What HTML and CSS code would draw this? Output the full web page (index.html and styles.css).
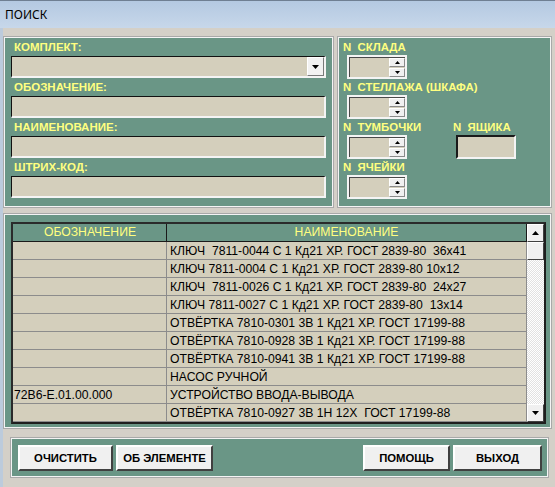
FILE: index.html
```html
<!DOCTYPE html>
<html>
<head>
<meta charset="utf-8">
<title>ПОИСК</title>
<link rel="stylesheet" href="styles.css">
</head>
<body>
<div class="titlebar">ПОИСК</div>
<div class="main">
  <div class="top">
    <div class="panel left">
      <div class="lbl">КОМПЛЕКТ:</div>
      <div class="field combo"><span class="dd"><svg width="7" height="4" viewBox="0 0 7 4"><path d="M0 0H7L3.5 4Z" fill="#000"/></svg></span></div>
      <div class="lbl">ОБОЗНАЧЕНИЕ:</div>
      <div class="field"></div>
      <div class="lbl">НАИМЕНОВАНИЕ:</div>
      <div class="field"></div>
      <div class="lbl">ШТРИХ-КОД:</div>
      <div class="field"></div>
    </div>
    <div class="panel right">
      <div class="rlbl">N  СКЛАДА</div>
      <div class="spin"><div class="sbtns"><span class="sb"><svg width="5" height="3" viewBox="0 0 5 3"><path d="M0 3H5L2.5 0Z" fill="#000"/></svg></span><span class="sb"><svg width="5" height="3" viewBox="0 0 5 3"><path d="M0 0H5L2.5 3Z" fill="#000"/></svg></span></div></div>
      <div class="rlbl">N  СТЕЛЛАЖА (ШКАФА)</div>
      <div class="spin"><div class="sbtns"><span class="sb"><svg width="5" height="3" viewBox="0 0 5 3"><path d="M0 3H5L2.5 0Z" fill="#000"/></svg></span><span class="sb"><svg width="5" height="3" viewBox="0 0 5 3"><path d="M0 0H5L2.5 3Z" fill="#000"/></svg></span></div></div>
      <div class="pair">
        <div class="pcol1">
          <div class="rlbl">N  ТУМБОЧКИ</div>
          <div class="spin"><div class="sbtns"><span class="sb"><svg width="5" height="3" viewBox="0 0 5 3"><path d="M0 3H5L2.5 0Z" fill="#000"/></svg></span><span class="sb"><svg width="5" height="3" viewBox="0 0 5 3"><path d="M0 0H5L2.5 3Z" fill="#000"/></svg></span></div></div>
        </div>
        <div class="pcol2">
          <div class="rlbl">N  ЯЩИКА</div>
          <div class="box"></div>
        </div>
      </div>
      <div class="rlbl">N  ЯЧЕЙКИ</div>
      <div class="spin"><div class="sbtns"><span class="sb"><svg width="5" height="3" viewBox="0 0 5 3"><path d="M0 3H5L2.5 0Z" fill="#000"/></svg></span><span class="sb"><svg width="5" height="3" viewBox="0 0 5 3"><path d="M0 0H5L2.5 3Z" fill="#000"/></svg></span></div></div>
    </div>
  </div>

  <div class="panel tablepanel">
    <div class="grid">
      <div class="tbl">
        <div class="row head"><div class="c1">ОБОЗНАЧЕНИЕ</div><div class="c2 hc">НАИМЕНОВАНИЕ</div></div>
        <div class="row"><div class="c1"></div><div class="c2">КЛЮЧ  7811-0044 С 1 Кд21 ХР. ГОСТ 2839-80  36х41</div></div>
        <div class="row"><div class="c1"></div><div class="c2">КЛЮЧ 7811-0004 С 1 Кд21 ХР. ГОСТ 2839-80 10х12</div></div>
        <div class="row"><div class="c1"></div><div class="c2">КЛЮЧ  7811-0026 С 1 Кд21 ХР. ГОСТ 2839-80  24х27</div></div>
        <div class="row"><div class="c1"></div><div class="c2">КЛЮЧ 7811-0027 С 1 Кд21 ХР. ГОСТ 2839-80  13х14</div></div>
        <div class="row"><div class="c1"></div><div class="c2">ОТВЁРТКА 7810-0301 3В 1 Кд21 ХР. ГОСТ 17199-88</div></div>
        <div class="row"><div class="c1"></div><div class="c2">ОТВЁРТКА 7810-0928 3В 1 Кд21 ХР. ГОСТ 17199-88</div></div>
        <div class="row"><div class="c1"></div><div class="c2">ОТВЁРТКА 7810-0941 3В 1 Кд21 ХР. ГОСТ 17199-88</div></div>
        <div class="row"><div class="c1"></div><div class="c2">НАСОС РУЧНОЙ</div></div>
        <div class="row"><div class="c1">72В6-Е.01.00.000</div><div class="c2">УСТРОЙСТВО ВВОДА-ВЫВОДА</div></div>
        <div class="row"><div class="c1"></div><div class="c2">ОТВЁРТКА 7810-0927 3В 1Н 12Х  ГОСТ 17199-88</div></div>
      </div>
      <div class="vscroll">
        <div class="sbtn"><svg width="7" height="4" viewBox="0 0 7 4"><path d="M0 4H7L3.5 0Z" fill="#000"/></svg></div>
        <div class="thumb"></div>
        <div class="track"></div>
        <div class="sbtn"><svg width="7" height="4" viewBox="0 0 7 4"><path d="M0 0H7L3.5 4Z" fill="#000"/></svg></div>
      </div>
    </div>
  </div>

  <div class="panel btnpanel">
    <button class="btn w95">ОЧИСТИТЬ</button>
    <button class="btn w97">ОБ ЭЛЕМЕНТЕ</button>
    <span class="spacer"></span>
    <button class="btn w87">ПОМОЩЬ</button>
    <button class="btn w89">ВЫХОД</button>
  </div>
</div>
</body>
</html>
```
FILE: styles.css
```css
* { box-sizing: border-box; }

body {
  margin: 0;
  width: 555px;
  height: 487px;
  overflow: hidden;
  background: #d4d0c8;
  font-family: "Liberation Sans", Arial, sans-serif;
}

.titlebar {
  height: 28px;
  padding-left: 5px;
  background: linear-gradient(#b4c9e1, #c7d7ea);
  border-top: 1px solid #6f7f92;
  font: 12px "Noto Sans", "Liberation Sans", sans-serif;
  line-height: 27px;
  color: #000;
}

.main {
  border-left: 3px solid #bccbdc;
  padding: 9px 4px 0 1px;
  height: 459px;
}

.top {
  display: flex;
  gap: 5px;
}

.panel {
  background: #6a9686;
  border: 1px solid #f4f4f4;
  box-shadow: 0 0 0 1px #a9a9a9;
}

.left {
  width: 329px;
  padding: 0 6px 8px 6px;
}

.lbl {
  height: 18px;
  line-height: 18px;
  padding-left: 3px;
  color: #ffff80;
  font-weight: bold;
  font-size: 11.5px;
}

.field {
  height: 22px;
  background: #d4cfbc;
  border-top: 1px solid #111;
  border-left: 1px solid #111;
  border-right: 2px solid #f4f4f4;
  border-bottom: 2px solid #f4f4f4;
}

.combo {
  display: flex;
  justify-content: flex-end;
  align-items: stretch;
}

.dd {
  width: 17px;
  background: #f2f2f2;
  border: 1px solid;
  border-color: #fff #7a7a7a #7a7a7a #fff;
  display: flex;
  align-items: center;
  justify-content: center;
}

.right {
  width: 213px;
  padding: 1px 4px 7px 4px;
}

.rlbl {
  height: 16px;
  line-height: 16px;
  color: #ffff80;
  font-weight: bold;
  font-size: 11.4px;
  white-space: pre;
}

.spin {
  margin-left: 4px;
  width: 60px;
  height: 24px;
  background: #d4cfbc;
  border: 2px solid #f4f4f4;
  box-shadow: inset 1px 1px 0 #4a4a4a;
  display: flex;
  justify-content: flex-end;
  padding: 1px 0 0 0;
}

.sbtns {
  width: 16px;
  display: flex;
  flex-direction: column;
  gap: 1px;
}

.sb {
  flex: 1;
  background: #f0f0f0;
  border: 1px solid;
  border-color: #fff #8a8a8a #8a8a8a #fff;
  display: flex;
  align-items: center;
  justify-content: center;
}

.pair {
  display: flex;
}

.pcol1 {
  width: 110px;
}

.box {
  margin-left: 3px;
  width: 60px;
  height: 24px;
  background: #d4cfbc;
  border: 2px solid;
  border-color: #1a1a1a #f4f4f4 #f4f4f4 #1a1a1a;
}

.tablepanel {
  margin-top: 7px;
  padding: 7px 4px 3px 6px;
}

.grid {
  display: flex;
  background: #d4cfbc;
  border: 2px solid;
  border-color: #2a2a2a #1e1e1e #1e1e1e #2a2a2a;
}

.tbl {
  flex: 1;
}

.row {
  display: flex;
  height: 18px;
  border-bottom: 1px solid #8c8c8c;
  font-size: 12.2px;
  line-height: 18px;
  color: #000;
}

.c1 {
  width: 154px;
  border-right: 1px solid #8c8c8c;
  padding-left: 1px;
}

.c2 {
  flex: 1;
  padding-left: 3px;
  white-space: pre;
  border-right: 1px solid #8c8c8c;
}

.head {
  background: #6a9686;
  color: #ffff80;
  border-bottom: 1px solid #1a1a1a;
  line-height: 17px;
}

.head .c1 {
  border-right: 1px solid #1a1a1a;
  text-align: center;
}

.head .hc {
  text-align: center;
  padding-left: 0;
  border-right: 1px solid #1a1a1a;
}

.vscroll {
  width: 17px;
  display: flex;
  flex-direction: column;
}

.sbtn, .thumb {
  height: 18px;
  background: #f0f0f0;
  border: 1px solid;
  border-color: #fff #404040 #404040 #fff;
  display: flex;
  align-items: center;
  justify-content: center;
}

.track {
  flex: 1;
  background: repeating-conic-gradient(#ffffff 0 25%, #e2e2e2 0 50%) 0 0 / 2px 2px;
}

.btnpanel {
  display: flex;
  gap: 3px;
  margin: 10px 3px 0 7px;
  padding: 6px 5px 5px 6px;
}

.spacer {
  flex: 1;
}

.btn {
  height: 26px;
  padding: 0;
  background: #f0f0f0;
  border: 2px solid;
  border-color: #ffffff #404040 #404040 #ffffff;
  font-family: "Liberation Sans", Arial, sans-serif;
  font-weight: bold;
  font-size: 11.3px;
  color: #000;
}

.w95 { width: 95px; }
.w97 { width: 97px; }
.w87 { width: 87px; }
.w89 { width: 89px; }
```
